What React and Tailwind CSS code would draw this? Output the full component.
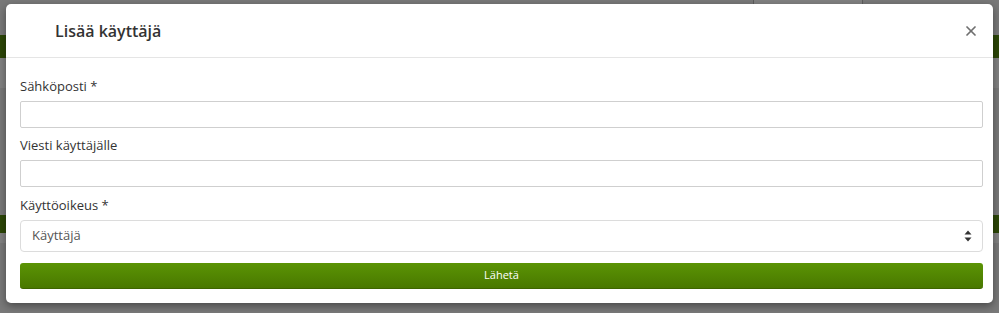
import { X } from 'lucide-react'

function Field({ label, children }) {
  return (
    <div className="flex flex-col">
      <label className="h-[20px] mb-[5px] text-[13px] leading-[20px] text-[#333]">{label}</label>
      {children}
    </div>
  )
}

export default function App() {
  return (
    <div className="relative w-[999px] h-[313px] overflow-hidden bg-[#797979] font-['Open_Sans','Noto_Sans',sans-serif]">
      {/* Dimmed page behind the modal */}
      <div className="flex flex-col">
        <div className="h-[35px] flex justify-end pr-[136px]">
          <div className="w-[110px] h-[5px] border-x border-b border-[#5d5d5d] bg-[#828282]" />
        </div>
        <div className="h-[23px] bg-[#2c4707]" />
        <div className="h-[30px] bg-[#828282]" />
        <div className="h-[127px]" />
        <div className="h-[18px] bg-[#2c4707]" />
        <div className="h-[10px] bg-[#828282]" />
      </div>

      {/* Modal */}
      <div className="absolute left-[6px] top-[4px] w-[987px] h-[299px] rounded-[5px] bg-white shadow-[0_3px_9px_rgba(0,0,0,0.4)] flex flex-col">
        <div className="h-[54px] shrink-0 flex items-center justify-between pl-[49px] pr-[14px] border-b border-[#e5e5e5]">
          <h4 className="text-[16px] font-semibold text-[#333]">Lisää käyttäjä</h4>
          <X size={16} strokeWidth={2.6} className="text-[#6f6f6f]" />
        </div>
        <div className="flex flex-col pl-[14px] pr-[10px] pt-[18px]">
          <Field label="Sähköposti *">
            <input className="h-[27px] border border-[#cfcfcf] rounded-[2px] outline-none" />
          </Field>
          <div className="h-[7px]" />
          <Field label="Viesti käyttäjälle">
            <input className="h-[27px] border border-[#cfcfcf] rounded-[2px] outline-none" />
          </Field>
          <div className="h-[8px]" />
          <Field label="Käyttöoikeus *">
            <div className="h-[32px] border border-[#dcdcdc] rounded-[4px] flex items-center justify-between pl-[11px] pr-[10px]">
              <span className="text-[13px] text-[#555]">Käyttäjä</span>
              <svg width="8" height="12" viewBox="0 0 8 12" className="text-[#333]">
                <path d="M4 0.5 L7.5 4.5 H0.5 Z M4 11.5 L7.5 7.5 H0.5 Z" fill="currentColor" />
              </svg>
            </div>
          </Field>
          <button className="mt-[11px] h-[26px] rounded-[3px] bg-gradient-to-b from-[#5b9405] to-[#497800] border-b border-[#3e6500] text-white text-[11px]">
            Lähetä
          </button>
        </div>
      </div>
    </div>
  )
}
